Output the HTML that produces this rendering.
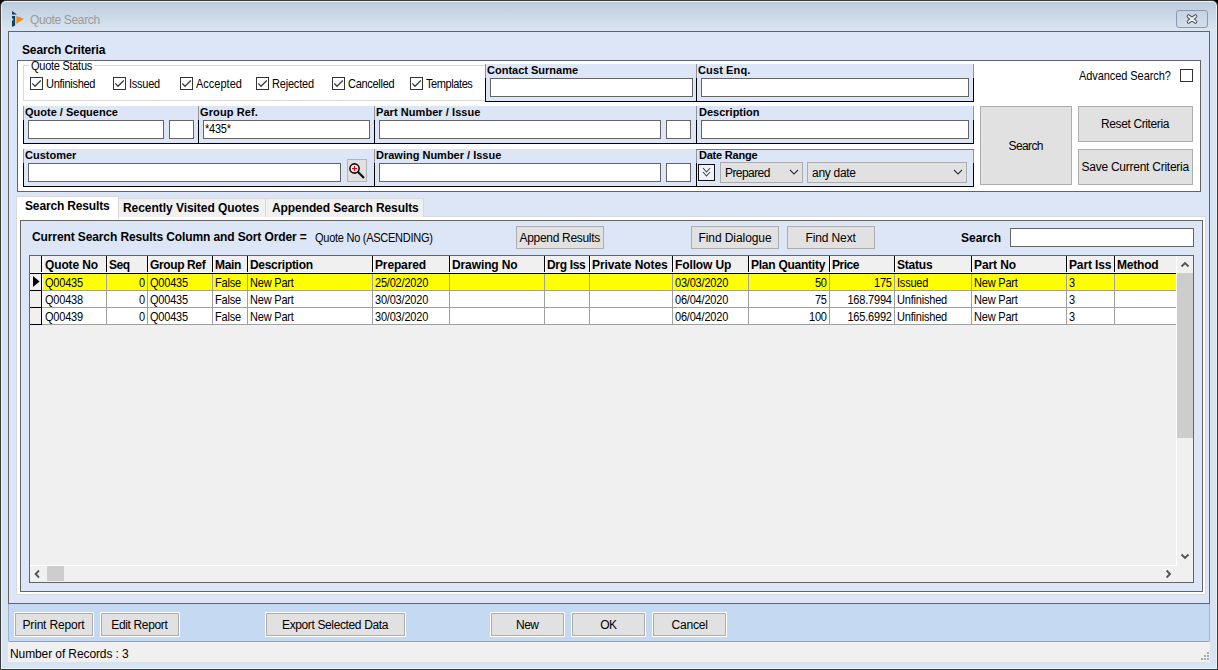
<!DOCTYPE html><html><head><meta charset="utf-8"><style>
html,body{margin:0;padding:0;background:#000;width:1218px;height:670px;overflow:hidden}
body>div{position:absolute}
div{box-sizing:border-box}
.t{position:absolute;white-space:pre;font-family:"Liberation Sans",sans-serif;color:#000}
.cb{position:absolute;width:13px;height:13px;border:1px solid #333;background:#fff;box-sizing:border-box}
svg{position:absolute}
</style></head><body>
<div style="left:0;top:0;width:1218px;height:670px;background:#3c3c3c;border-radius:6px 6px 0 0"></div>
<div style="left:1px;top:1px;width:1216px;height:668px;background:#edf2f8;border-radius:5px 5px 0 0"></div>
<div style="left:2px;top:2px;width:1214px;height:666px;background:#d7e3f1;border-radius:4px 4px 0 0"></div>
<div style="left:2px;top:2px;width:1214px;height:29px;background:linear-gradient(#bccbdc,#dbe6f1);border-radius:4px 4px 0 0"></div>
<svg style="position:absolute;left:10px;top:9px" width="18" height="20" viewBox="0 0 18 20"><path d="M2 2 L7 5.6 L2 5.6 Z" fill="#123f66"/><path d="M2 7 L5.1 7 L5.1 16.5 L2 18 L2 11.5 L3.2 11.5 L3.2 9.6 L2 9.6 Z" fill="#123f66"/><path d="M6.4 6.9 L14 9.8 L6.4 14.8 Z" fill="#f08a1c"/></svg>
<div class="t" style="left:30px;top:14px;font-size:12px;line-height:12px;letter-spacing:-0.36px;color:#9a9a9a;">Quote Search</div>
<div style="left:1176px;top:10px;width:32px;height:18px;border:1px solid #8a99b2;border-radius:3px;background:linear-gradient(#c6d3e2,#d3deea);box-sizing:border-box"></div>
<svg style="position:absolute;left:1184px;top:12px" width="16" height="14" viewBox="0 0 16 14"><path d="M4.6 4.2 L11.4 9.8 M11.4 4.2 L4.6 9.8" stroke="#3f4450" stroke-width="3.8" stroke-linecap="round"/><path d="M4.6 4.2 L11.4 9.8 M11.4 4.2 L4.6 9.8" stroke="#f2f2f2" stroke-width="2" stroke-linecap="round"/></svg>
<div style="left:8px;top:31px;width:1202px;height:573px;background:#dce6f7;box-shadow:inset 0 0 0 1px #646464"></div>
<div class="t" style="left:22px;top:44px;font-size:12px;line-height:12px;font-weight:bold;letter-spacing:-0.14px;">Search Criteria</div>
<div style="left:17px;top:60px;width:1184px;height:132px;background:#fff;box-shadow:inset 0 0 0 1px #646464"></div>
<div style="left:23px;top:65px;width:462px;height:36px;border:1px solid #d9d9d9;border-right:none;box-sizing:border-box"></div>
<div style="left:29px;top:62px;width:65px;height:7px;background:#fff"></div>
<div class="t" style="left:31px;top:60px;font-size:11px;line-height:11px;letter-spacing:-0.27px;transform:scaleY(1.125);transform-origin:0 0;">Quote Status</div>
<div class="cb" style="left:30px;top:77px"></div>
<svg style="position:absolute;left:30px;top:77px" width="13" height="13" viewBox="0 0 13 13"><path d="M2.3 6.4 L5 9.3 L10.8 3.5" stroke="#3a3a3a" stroke-width="1.25" fill="none"/></svg>
<div class="t" style="left:46px;top:78px;font-size:11px;line-height:11px;letter-spacing:-0.28px;transform:scaleY(1.125);transform-origin:0 0;">Unfinished</div>
<div class="cb" style="left:113px;top:77px"></div>
<svg style="position:absolute;left:113px;top:77px" width="13" height="13" viewBox="0 0 13 13"><path d="M2.3 6.4 L5 9.3 L10.8 3.5" stroke="#3a3a3a" stroke-width="1.25" fill="none"/></svg>
<div class="t" style="left:129px;top:78px;font-size:11px;line-height:11px;letter-spacing:-0.26px;transform:scaleY(1.125);transform-origin:0 0;">Issued</div>
<div class="cb" style="left:180px;top:77px"></div>
<svg style="position:absolute;left:180px;top:77px" width="13" height="13" viewBox="0 0 13 13"><path d="M2.3 6.4 L5 9.3 L10.8 3.5" stroke="#3a3a3a" stroke-width="1.25" fill="none"/></svg>
<div class="t" style="left:196px;top:78px;font-size:11px;line-height:11px;transform:scaleY(1.125);transform-origin:0 0;">Accepted</div>
<div class="cb" style="left:256px;top:77px"></div>
<svg style="position:absolute;left:256px;top:77px" width="13" height="13" viewBox="0 0 13 13"><path d="M2.3 6.4 L5 9.3 L10.8 3.5" stroke="#3a3a3a" stroke-width="1.25" fill="none"/></svg>
<div class="t" style="left:272px;top:78px;font-size:11px;line-height:11px;letter-spacing:-0.19px;transform:scaleY(1.125);transform-origin:0 0;">Rejected</div>
<div class="cb" style="left:332px;top:77px"></div>
<svg style="position:absolute;left:332px;top:77px" width="13" height="13" viewBox="0 0 13 13"><path d="M2.3 6.4 L5 9.3 L10.8 3.5" stroke="#3a3a3a" stroke-width="1.25" fill="none"/></svg>
<div class="t" style="left:348px;top:78px;font-size:11px;line-height:11px;letter-spacing:-0.29px;transform:scaleY(1.125);transform-origin:0 0;">Cancelled</div>
<div class="cb" style="left:410px;top:77px"></div>
<svg style="position:absolute;left:410px;top:77px" width="13" height="13" viewBox="0 0 13 13"><path d="M2.3 6.4 L5 9.3 L10.8 3.5" stroke="#3a3a3a" stroke-width="1.25" fill="none"/></svg>
<div class="t" style="left:426px;top:78px;font-size:11px;line-height:11px;letter-spacing:-0.41px;transform:scaleY(1.125);transform-origin:0 0;">Templates</div>
<div style="left:485px;top:64px;width:211px;height:37px;background:#dce6f7"></div>
<div style="left:485px;top:64px;width:1px;height:14px;background:#8e96a4"></div>
<div style="left:485px;top:78px;width:1px;height:24px;background:#000"></div>
<div style="left:485px;top:101px;width:212px;height:1px;background:#000"></div>
<div style="left:696px;top:64px;width:277px;height:37px;background:#dce6f7"></div>
<div style="left:696px;top:64px;width:1px;height:14px;background:#8e96a4"></div>
<div style="left:696px;top:78px;width:1px;height:24px;background:#000"></div>
<div style="left:696px;top:101px;width:278px;height:1px;background:#000"></div>
<div style="left:973px;top:64px;width:1px;height:14px;background:#8e96a4"></div>
<div style="left:973px;top:78px;width:1px;height:24px;background:#000"></div>
<div class="t" style="left:487px;top:65px;font-size:11px;line-height:11px;font-weight:bold;">Contact Surname</div>
<div class="t" style="left:698px;top:65px;font-size:11px;line-height:11px;font-weight:bold;letter-spacing:0.12px;">Cust Enq.</div>
<div style="left:490px;top:78px;width:203px;height:19px;background:#fff;border:1px solid #646464;box-sizing:border-box"></div>
<div style="left:701px;top:78px;width:268px;height:19px;background:#fff;border:1px solid #646464;box-sizing:border-box"></div>
<div class="t" style="left:1079px;top:70px;font-size:11px;line-height:11px;letter-spacing:-0.07px;transform:scaleY(1.125);transform-origin:0 0;">Advanced Search?</div>
<div class="cb" style="left:1180px;top:69px"></div>
<div style="left:23px;top:106px;width:175px;height:37px;background:#dce6f7"></div>
<div style="left:23px;top:106px;width:1px;height:14px;background:#8e96a4"></div>
<div style="left:23px;top:120px;width:1px;height:24px;background:#000"></div>
<div style="left:23px;top:143px;width:176px;height:1px;background:#000"></div>
<div style="left:198px;top:106px;width:176px;height:37px;background:#dce6f7"></div>
<div style="left:198px;top:106px;width:1px;height:14px;background:#8e96a4"></div>
<div style="left:198px;top:120px;width:1px;height:24px;background:#000"></div>
<div style="left:198px;top:143px;width:177px;height:1px;background:#000"></div>
<div style="left:374px;top:106px;width:322px;height:37px;background:#dce6f7"></div>
<div style="left:374px;top:106px;width:1px;height:14px;background:#8e96a4"></div>
<div style="left:374px;top:120px;width:1px;height:24px;background:#000"></div>
<div style="left:374px;top:143px;width:323px;height:1px;background:#000"></div>
<div style="left:696px;top:106px;width:277px;height:37px;background:#dce6f7"></div>
<div style="left:696px;top:106px;width:1px;height:14px;background:#8e96a4"></div>
<div style="left:696px;top:120px;width:1px;height:24px;background:#000"></div>
<div style="left:696px;top:143px;width:278px;height:1px;background:#000"></div>
<div style="left:973px;top:106px;width:1px;height:14px;background:#8e96a4"></div>
<div style="left:973px;top:120px;width:1px;height:24px;background:#000"></div>
<div class="t" style="left:25px;top:107px;font-size:11px;line-height:11px;font-weight:bold;">Quote / Sequence</div>
<div class="t" style="left:200px;top:107px;font-size:11px;line-height:11px;font-weight:bold;letter-spacing:0.11px;">Group Ref.</div>
<div class="t" style="left:376px;top:107px;font-size:11px;line-height:11px;font-weight:bold;letter-spacing:0.06px;">Part Number / Issue</div>
<div class="t" style="left:699px;top:107px;font-size:11px;line-height:11px;font-weight:bold;">Description</div>
<div style="left:28px;top:120px;width:136px;height:19px;background:#fff;border:1px solid #646464;box-sizing:border-box"></div>
<div style="left:169px;top:120px;width:25px;height:19px;background:#fff;border:1px solid #646464;box-sizing:border-box"></div>
<div style="left:203px;top:120px;width:167px;height:19px;background:#fff;border:1px solid #646464;box-sizing:border-box"></div>
<div class="t" style="left:205px;top:123px;font-size:11px;line-height:11px;letter-spacing:-0.25px;transform:scaleY(1.125);transform-origin:0 0;">*435*</div>
<div style="left:379px;top:120px;width:282px;height:19px;background:#fff;border:1px solid #646464;box-sizing:border-box"></div>
<div style="left:666px;top:120px;width:25px;height:19px;background:#fff;border:1px solid #646464;box-sizing:border-box"></div>
<div style="left:701px;top:120px;width:268px;height:19px;background:#fff;border:1px solid #646464;box-sizing:border-box"></div>
<div style="left:23px;top:149px;width:351px;height:37px;background:#dce6f7"></div>
<div style="left:23px;top:149px;width:1px;height:14px;background:#8e96a4"></div>
<div style="left:23px;top:163px;width:1px;height:24px;background:#000"></div>
<div style="left:23px;top:186px;width:352px;height:1px;background:#000"></div>
<div style="left:374px;top:149px;width:322px;height:37px;background:#dce6f7"></div>
<div style="left:374px;top:149px;width:1px;height:14px;background:#8e96a4"></div>
<div style="left:374px;top:163px;width:1px;height:24px;background:#000"></div>
<div style="left:374px;top:186px;width:323px;height:1px;background:#000"></div>
<div style="left:696px;top:149px;width:277px;height:37px;background:#dce6f7"></div>
<div style="left:696px;top:149px;width:1px;height:14px;background:#8e96a4"></div>
<div style="left:696px;top:163px;width:1px;height:24px;background:#000"></div>
<div style="left:696px;top:186px;width:278px;height:1px;background:#000"></div>
<div style="left:973px;top:149px;width:1px;height:14px;background:#8e96a4"></div>
<div style="left:973px;top:163px;width:1px;height:24px;background:#000"></div>
<div style="left:696px;top:149px;width:278px;height:1px;background:#737884"></div>
<div class="t" style="left:25px;top:150px;font-size:11px;line-height:11px;font-weight:bold;">Customer</div>
<div class="t" style="left:376px;top:150px;font-size:11px;line-height:11px;font-weight:bold;">Drawing Number / Issue</div>
<div class="t" style="left:699px;top:150px;font-size:11px;line-height:11px;font-weight:bold;letter-spacing:-0.22px;">Date Range</div>
<div style="left:28px;top:163px;width:313px;height:19px;background:#fff;border:1px solid #646464;box-sizing:border-box"></div>
<div style="left:347px;top:159px;width:20px;height:23px;background:#e1e1e1;border:1px solid #b4b4b4;box-sizing:border-box"></div>
<svg style="position:absolute;left:347px;top:159px" width="20" height="23" viewBox="0 0 20 23"><circle cx="7.5" cy="9.5" r="4.6" fill="#eef4f6" stroke="#111" stroke-width="1.6"/><path d="M7.5 7 V12 M5 9.5 H10" stroke="#e00" stroke-width="1.2"/><path d="M10.8 12.8 L17 19" stroke="#111" stroke-width="2.2"/></svg>
<div style="left:379px;top:163px;width:282px;height:19px;background:#fff;border:1px solid #646464;box-sizing:border-box"></div>
<div style="left:666px;top:163px;width:25px;height:19px;background:#fff;border:1px solid #646464;box-sizing:border-box"></div>
<div style="left:698px;top:164px;width:17px;height:17px;background:#eef3fa;border:1.5px solid #111;box-sizing:border-box"></div>
<svg style="position:absolute;left:698px;top:164px" width="17" height="17" viewBox="0 0 17 17"><path d="M5 4 L8.5 8 L12 4 M5 8 L8.5 12 L12 8" stroke="#444" stroke-width="1.1" fill="none"/></svg>
<div style="left:720px;top:162px;width:83px;height:21px;background:#e1e1e1;border:1px solid #acacac;box-sizing:border-box"></div>
<div class="t" style="left:725px;top:167px;font-size:12px;line-height:12px;letter-spacing:-0.57px;">Prepared</div>
<svg style="position:absolute;left:789px;top:168px" width="10" height="8" viewBox="0 0 10 8"><path d="M1 2 L5 6 L9 2" stroke="#333" stroke-width="1.1" fill="none"/></svg>
<div style="left:807px;top:162px;width:160px;height:21px;background:#e1e1e1;border:1px solid #acacac;box-sizing:border-box"></div>
<div class="t" style="left:812px;top:167px;font-size:12px;line-height:12px;letter-spacing:-0.29px;">any date</div>
<svg style="position:absolute;left:953px;top:168px" width="10" height="8" viewBox="0 0 10 8"><path d="M1 2 L5 6 L9 2" stroke="#333" stroke-width="1.1" fill="none"/></svg>
<div style="left:980px;top:106px;width:92px;height:79px;background:#e1e1e1;border:1px solid #adadad;box-sizing:border-box"></div>
<div class="t" style="left:1008.5px;top:140px;font-size:12px;line-height:12px;letter-spacing:-0.60px;">Search</div>
<div style="left:1078px;top:106px;width:115px;height:36px;background:#e1e1e1;border:1px solid #adadad;box-sizing:border-box"></div>
<div class="t" style="left:1101.0px;top:118px;font-size:12px;line-height:12px;letter-spacing:-0.38px;">Reset Criteria</div>
<div style="left:1078px;top:149px;width:115px;height:36px;background:#e1e1e1;border:1px solid #adadad;box-sizing:border-box"></div>
<div class="t" style="left:1081.5px;top:161px;font-size:12px;line-height:12px;letter-spacing:-0.25px;">Save Current Criteria</div>
<div style="left:16px;top:216px;width:1190px;height:379px;background:#fff;border:1px solid #d9d9d9;box-sizing:border-box"></div>
<div style="left:16px;top:196px;width:103px;height:23px;background:#fff;border:1px solid #d9d9d9;border-bottom:none;box-sizing:border-box"></div>
<div style="left:118px;top:198px;width:148px;height:19px;background:#f0f0f0;border:1px solid #d9d9d9;border-bottom:none;box-sizing:border-box"></div>
<div style="left:265px;top:198px;width:159px;height:19px;background:#f0f0f0;border:1px solid #d9d9d9;border-bottom:none;box-sizing:border-box"></div>
<div class="t" style="left:25px;top:200px;font-size:12px;line-height:12px;font-weight:bold;letter-spacing:-0.15px;">Search Results</div>
<div class="t" style="left:123px;top:202px;font-size:12px;line-height:12px;font-weight:bold;letter-spacing:-0.05px;">Recently Visited Quotes</div>
<div class="t" style="left:272px;top:202px;font-size:12px;line-height:12px;font-weight:bold;letter-spacing:-0.09px;">Appended Search Results</div>
<div style="left:20px;top:220px;width:1183px;height:372px;background:#dce6f7;border:1px solid #646464;box-sizing:border-box"></div>
<div class="t" style="left:32px;top:231px;font-size:12px;line-height:12px;font-weight:bold;letter-spacing:-0.11px;">Current Search Results Column and Sort Order =</div>
<div class="t" style="left:315px;top:232px;font-size:11px;line-height:11px;letter-spacing:-0.26px;transform:scaleY(1.125);transform-origin:0 0;">Quote No (ASCENDING)</div>
<div style="left:516px;top:226px;width:88px;height:23px;background:#e1e1e1;border:1px solid #adadad;box-sizing:border-box"></div>
<div class="t" style="left:519.5px;top:232px;font-size:12px;line-height:12px;letter-spacing:-0.31px;">Append Results</div>
<div style="left:691px;top:226px;width:88px;height:23px;background:#e1e1e1;border:1px solid #adadad;box-sizing:border-box"></div>
<div class="t" style="left:698.5px;top:232px;font-size:12px;line-height:12px;letter-spacing:-0.08px;">Find Dialogue</div>
<div style="left:787px;top:226px;width:88px;height:23px;background:#e1e1e1;border:1px solid #adadad;box-sizing:border-box"></div>
<div class="t" style="left:805.5px;top:232px;font-size:12px;line-height:12px;letter-spacing:-0.12px;">Find Next</div>
<div class="t" style="left:961px;top:232px;font-size:12px;line-height:12px;font-weight:bold;">Search</div>
<div style="left:1010px;top:228px;width:184px;height:19px;background:#fff;border:1px solid #646464;box-sizing:border-box"></div>
<div style="left:29px;top:255px;width:1165px;height:328px;background:#f0f0f0;border:1px solid #646464;box-sizing:border-box"></div>
<div style="left:30px;top:256px;width:1146px;height:16px;background:#f0f0f0"></div>
<div style="left:30px;top:272px;width:1146px;height:1px;background:#fff"></div>
<div style="left:30px;top:273px;width:1146px;height:1px;background:#000"></div>
<div style="left:30px;top:256px;width:12px;height:16px;background:#f0f0f0"></div>
<div style="left:41px;top:256px;width:1px;height:16px;background:#000"></div>
<div style="left:106px;top:256px;width:1px;height:16px;background:#000"></div>
<div style="left:43px;top:256px;width:1px;height:16px;background:#fff"></div>
<div class="t" style="left:45px;top:259px;font-size:12px;line-height:12px;font-weight:bold;letter-spacing:-0.14px;">Quote No</div>
<div style="left:147px;top:256px;width:1px;height:16px;background:#000"></div>
<div style="left:107px;top:256px;width:1px;height:16px;background:#fff"></div>
<div class="t" style="left:109px;top:259px;font-size:12px;line-height:12px;font-weight:bold;letter-spacing:-0.50px;">Seq</div>
<div style="left:212px;top:256px;width:1px;height:16px;background:#000"></div>
<div style="left:148px;top:256px;width:1px;height:16px;background:#fff"></div>
<div class="t" style="left:150px;top:259px;font-size:12px;line-height:12px;font-weight:bold;letter-spacing:-0.38px;">Group Ref</div>
<div style="left:247px;top:256px;width:1px;height:16px;background:#000"></div>
<div style="left:213px;top:256px;width:1px;height:16px;background:#fff"></div>
<div class="t" style="left:215px;top:259px;font-size:12px;line-height:12px;font-weight:bold;letter-spacing:-0.33px;">Main</div>
<div style="left:372px;top:256px;width:1px;height:16px;background:#000"></div>
<div style="left:248px;top:256px;width:1px;height:16px;background:#fff"></div>
<div class="t" style="left:250px;top:259px;font-size:12px;line-height:12px;font-weight:bold;letter-spacing:-0.30px;">Description</div>
<div style="left:449px;top:256px;width:1px;height:16px;background:#000"></div>
<div style="left:373px;top:256px;width:1px;height:16px;background:#fff"></div>
<div class="t" style="left:375px;top:259px;font-size:12px;line-height:12px;font-weight:bold;letter-spacing:-0.14px;">Prepared</div>
<div style="left:544px;top:256px;width:1px;height:16px;background:#000"></div>
<div style="left:450px;top:256px;width:1px;height:16px;background:#fff"></div>
<div class="t" style="left:452px;top:259px;font-size:12px;line-height:12px;font-weight:bold;letter-spacing:-0.11px;">Drawing No</div>
<div style="left:589px;top:256px;width:1px;height:16px;background:#000"></div>
<div style="left:545px;top:256px;width:1px;height:16px;background:#fff"></div>
<div class="t" style="left:547px;top:259px;font-size:12px;line-height:12px;font-weight:bold;letter-spacing:-0.33px;">Drg Iss</div>
<div style="left:672px;top:256px;width:1px;height:16px;background:#000"></div>
<div style="left:590px;top:256px;width:1px;height:16px;background:#fff"></div>
<div class="t" style="left:592px;top:259px;font-size:12px;line-height:12px;font-weight:bold;letter-spacing:-0.08px;">Private Notes</div>
<div style="left:748px;top:256px;width:1px;height:16px;background:#000"></div>
<div style="left:673px;top:256px;width:1px;height:16px;background:#fff"></div>
<div class="t" style="left:675px;top:259px;font-size:12px;line-height:12px;font-weight:bold;letter-spacing:-0.12px;">Follow Up</div>
<div style="left:829px;top:256px;width:1px;height:16px;background:#000"></div>
<div style="left:749px;top:256px;width:1px;height:16px;background:#fff"></div>
<div class="t" style="left:751px;top:259px;font-size:12px;line-height:12px;font-weight:bold;letter-spacing:-0.25px;">Plan Quantity</div>
<div style="left:894px;top:256px;width:1px;height:16px;background:#000"></div>
<div style="left:830px;top:256px;width:1px;height:16px;background:#fff"></div>
<div class="t" style="left:832px;top:259px;font-size:12px;line-height:12px;font-weight:bold;letter-spacing:-0.50px;">Price</div>
<div style="left:971px;top:256px;width:1px;height:16px;background:#000"></div>
<div style="left:895px;top:256px;width:1px;height:16px;background:#fff"></div>
<div class="t" style="left:897px;top:259px;font-size:12px;line-height:12px;font-weight:bold;letter-spacing:-0.20px;">Status</div>
<div style="left:1066px;top:256px;width:1px;height:16px;background:#000"></div>
<div style="left:972px;top:256px;width:1px;height:16px;background:#fff"></div>
<div class="t" style="left:974px;top:259px;font-size:12px;line-height:12px;font-weight:bold;letter-spacing:-0.08px;">Part No</div>
<div style="left:1114px;top:256px;width:1px;height:16px;background:#000"></div>
<div style="left:1067px;top:256px;width:1px;height:16px;background:#fff"></div>
<div class="t" style="left:1069px;top:259px;font-size:12px;line-height:12px;font-weight:bold;letter-spacing:-0.14px;">Part Iss</div>
<div style="left:1176px;top:256px;width:1px;height:16px;background:#000"></div>
<div style="left:1115px;top:256px;width:1px;height:16px;background:#fff"></div>
<div class="t" style="left:1117px;top:259px;font-size:12px;line-height:12px;font-weight:bold;letter-spacing:-0.20px;">Method</div>
<div style="left:42px;top:274px;width:1134px;height:16px;background:#fff"></div>
<div style="left:43px;top:274px;width:1133px;height:16px;background:#ffff00"></div>
<div style="left:42px;top:290px;width:1134px;height:1px;background:#a0a0a0"></div>
<div style="left:30px;top:274px;width:12px;height:17px;background:#f0f0f0"></div>
<div style="left:41px;top:274px;width:1px;height:17px;background:#000"></div>
<div style="left:30px;top:290px;width:12px;height:1px;background:#000"></div>
<div class="t" style="left:45px;top:277px;font-size:11px;line-height:11px;letter-spacing:-0.20px;transform:scaleY(1.125);transform-origin:0 0;">Q00435</div>
<div style="left:106px;top:274px;width:1px;height:16px;background:#a0a0a0"></div>
<div class="t" style="left:138.88px;top:277px;font-size:11px;line-height:11px;letter-spacing:-0.20px;transform:scaleY(1.125);transform-origin:0 0;">0</div>
<div style="left:147px;top:274px;width:1px;height:16px;background:#a0a0a0"></div>
<div class="t" style="left:150px;top:277px;font-size:11px;line-height:11px;letter-spacing:-0.20px;transform:scaleY(1.125);transform-origin:0 0;">Q00435</div>
<div style="left:212px;top:274px;width:1px;height:16px;background:#a0a0a0"></div>
<div class="t" style="left:215px;top:277px;font-size:11px;line-height:11px;letter-spacing:-0.20px;transform:scaleY(1.125);transform-origin:0 0;">False</div>
<div style="left:247px;top:274px;width:1px;height:16px;background:#a0a0a0"></div>
<div class="t" style="left:250px;top:277px;font-size:11px;line-height:11px;letter-spacing:-0.20px;transform:scaleY(1.125);transform-origin:0 0;">New Part</div>
<div style="left:372px;top:274px;width:1px;height:16px;background:#a0a0a0"></div>
<div class="t" style="left:375px;top:277px;font-size:11px;line-height:11px;letter-spacing:-0.20px;transform:scaleY(1.125);transform-origin:0 0;">25/02/2020</div>
<div style="left:449px;top:274px;width:1px;height:16px;background:#a0a0a0"></div>
<div style="left:544px;top:274px;width:1px;height:16px;background:#a0a0a0"></div>
<div style="left:589px;top:274px;width:1px;height:16px;background:#a0a0a0"></div>
<div style="left:672px;top:274px;width:1px;height:16px;background:#a0a0a0"></div>
<div class="t" style="left:675px;top:277px;font-size:11px;line-height:11px;letter-spacing:-0.20px;transform:scaleY(1.125);transform-origin:0 0;">03/03/2020</div>
<div style="left:748px;top:274px;width:1px;height:16px;background:#a0a0a0"></div>
<div class="t" style="left:814.95px;top:277px;font-size:11px;line-height:11px;letter-spacing:-0.20px;transform:scaleY(1.125);transform-origin:0 0;">50</div>
<div style="left:829px;top:274px;width:1px;height:16px;background:#a0a0a0"></div>
<div class="t" style="left:874.02px;top:277px;font-size:11px;line-height:11px;letter-spacing:-0.20px;transform:scaleY(1.125);transform-origin:0 0;">175</div>
<div style="left:894px;top:274px;width:1px;height:16px;background:#a0a0a0"></div>
<div class="t" style="left:897px;top:277px;font-size:11px;line-height:11px;letter-spacing:-0.20px;transform:scaleY(1.125);transform-origin:0 0;">Issued</div>
<div style="left:971px;top:274px;width:1px;height:16px;background:#a0a0a0"></div>
<div class="t" style="left:974px;top:277px;font-size:11px;line-height:11px;letter-spacing:-0.20px;transform:scaleY(1.125);transform-origin:0 0;">New Part</div>
<div style="left:1066px;top:274px;width:1px;height:16px;background:#a0a0a0"></div>
<div class="t" style="left:1069px;top:277px;font-size:11px;line-height:11px;letter-spacing:-0.20px;transform:scaleY(1.125);transform-origin:0 0;">3</div>
<div style="left:1114px;top:274px;width:1px;height:16px;background:#a0a0a0"></div>
<div style="left:42px;top:291px;width:1134px;height:16px;background:#fff"></div>
<div style="left:43px;top:291px;width:1133px;height:16px;background:#fff"></div>
<div style="left:42px;top:307px;width:1134px;height:1px;background:#a0a0a0"></div>
<div style="left:30px;top:291px;width:12px;height:17px;background:#f0f0f0"></div>
<div style="left:41px;top:291px;width:1px;height:17px;background:#000"></div>
<div style="left:30px;top:307px;width:12px;height:1px;background:#000"></div>
<div class="t" style="left:45px;top:294px;font-size:11px;line-height:11px;letter-spacing:-0.20px;transform:scaleY(1.125);transform-origin:0 0;">Q00438</div>
<div style="left:106px;top:291px;width:1px;height:16px;background:#a0a0a0"></div>
<div class="t" style="left:138.88px;top:294px;font-size:11px;line-height:11px;letter-spacing:-0.20px;transform:scaleY(1.125);transform-origin:0 0;">0</div>
<div style="left:147px;top:291px;width:1px;height:16px;background:#a0a0a0"></div>
<div class="t" style="left:150px;top:294px;font-size:11px;line-height:11px;letter-spacing:-0.20px;transform:scaleY(1.125);transform-origin:0 0;">Q00435</div>
<div style="left:212px;top:291px;width:1px;height:16px;background:#a0a0a0"></div>
<div class="t" style="left:215px;top:294px;font-size:11px;line-height:11px;letter-spacing:-0.20px;transform:scaleY(1.125);transform-origin:0 0;">False</div>
<div style="left:247px;top:291px;width:1px;height:16px;background:#a0a0a0"></div>
<div class="t" style="left:250px;top:294px;font-size:11px;line-height:11px;letter-spacing:-0.20px;transform:scaleY(1.125);transform-origin:0 0;">New Part</div>
<div style="left:372px;top:291px;width:1px;height:16px;background:#a0a0a0"></div>
<div class="t" style="left:375px;top:294px;font-size:11px;line-height:11px;letter-spacing:-0.20px;transform:scaleY(1.125);transform-origin:0 0;">30/03/2020</div>
<div style="left:449px;top:291px;width:1px;height:16px;background:#a0a0a0"></div>
<div style="left:544px;top:291px;width:1px;height:16px;background:#a0a0a0"></div>
<div style="left:589px;top:291px;width:1px;height:16px;background:#a0a0a0"></div>
<div style="left:672px;top:291px;width:1px;height:16px;background:#a0a0a0"></div>
<div class="t" style="left:675px;top:294px;font-size:11px;line-height:11px;letter-spacing:-0.20px;transform:scaleY(1.125);transform-origin:0 0;">06/04/2020</div>
<div style="left:748px;top:291px;width:1px;height:16px;background:#a0a0a0"></div>
<div class="t" style="left:814.95px;top:294px;font-size:11px;line-height:11px;letter-spacing:-0.20px;transform:scaleY(1.125);transform-origin:0 0;">75</div>
<div style="left:829px;top:291px;width:1px;height:16px;background:#a0a0a0"></div>
<div class="t" style="left:847.46px;top:294px;font-size:11px;line-height:11px;letter-spacing:-0.20px;transform:scaleY(1.125);transform-origin:0 0;">168.7994</div>
<div style="left:894px;top:291px;width:1px;height:16px;background:#a0a0a0"></div>
<div class="t" style="left:897px;top:294px;font-size:11px;line-height:11px;letter-spacing:-0.20px;transform:scaleY(1.125);transform-origin:0 0;">Unfinished</div>
<div style="left:971px;top:291px;width:1px;height:16px;background:#a0a0a0"></div>
<div class="t" style="left:974px;top:294px;font-size:11px;line-height:11px;letter-spacing:-0.20px;transform:scaleY(1.125);transform-origin:0 0;">New Part</div>
<div style="left:1066px;top:291px;width:1px;height:16px;background:#a0a0a0"></div>
<div class="t" style="left:1069px;top:294px;font-size:11px;line-height:11px;letter-spacing:-0.20px;transform:scaleY(1.125);transform-origin:0 0;">3</div>
<div style="left:1114px;top:291px;width:1px;height:16px;background:#a0a0a0"></div>
<div style="left:42px;top:308px;width:1134px;height:16px;background:#fff"></div>
<div style="left:43px;top:308px;width:1133px;height:16px;background:#fff"></div>
<div style="left:42px;top:324px;width:1134px;height:1px;background:#a0a0a0"></div>
<div style="left:30px;top:308px;width:12px;height:17px;background:#f0f0f0"></div>
<div style="left:41px;top:308px;width:1px;height:17px;background:#000"></div>
<div style="left:30px;top:324px;width:12px;height:1px;background:#000"></div>
<div class="t" style="left:45px;top:311px;font-size:11px;line-height:11px;letter-spacing:-0.20px;transform:scaleY(1.125);transform-origin:0 0;">Q00439</div>
<div style="left:106px;top:308px;width:1px;height:16px;background:#a0a0a0"></div>
<div class="t" style="left:138.88px;top:311px;font-size:11px;line-height:11px;letter-spacing:-0.20px;transform:scaleY(1.125);transform-origin:0 0;">0</div>
<div style="left:147px;top:308px;width:1px;height:16px;background:#a0a0a0"></div>
<div class="t" style="left:150px;top:311px;font-size:11px;line-height:11px;letter-spacing:-0.20px;transform:scaleY(1.125);transform-origin:0 0;">Q00435</div>
<div style="left:212px;top:308px;width:1px;height:16px;background:#a0a0a0"></div>
<div class="t" style="left:215px;top:311px;font-size:11px;line-height:11px;letter-spacing:-0.20px;transform:scaleY(1.125);transform-origin:0 0;">False</div>
<div style="left:247px;top:308px;width:1px;height:16px;background:#a0a0a0"></div>
<div class="t" style="left:250px;top:311px;font-size:11px;line-height:11px;letter-spacing:-0.20px;transform:scaleY(1.125);transform-origin:0 0;">New Part</div>
<div style="left:372px;top:308px;width:1px;height:16px;background:#a0a0a0"></div>
<div class="t" style="left:375px;top:311px;font-size:11px;line-height:11px;letter-spacing:-0.20px;transform:scaleY(1.125);transform-origin:0 0;">30/03/2020</div>
<div style="left:449px;top:308px;width:1px;height:16px;background:#a0a0a0"></div>
<div style="left:544px;top:308px;width:1px;height:16px;background:#a0a0a0"></div>
<div style="left:589px;top:308px;width:1px;height:16px;background:#a0a0a0"></div>
<div style="left:672px;top:308px;width:1px;height:16px;background:#a0a0a0"></div>
<div class="t" style="left:675px;top:311px;font-size:11px;line-height:11px;letter-spacing:-0.20px;transform:scaleY(1.125);transform-origin:0 0;">06/04/2020</div>
<div style="left:748px;top:308px;width:1px;height:16px;background:#a0a0a0"></div>
<div class="t" style="left:809.02px;top:311px;font-size:11px;line-height:11px;letter-spacing:-0.20px;transform:scaleY(1.125);transform-origin:0 0;">100</div>
<div style="left:829px;top:308px;width:1px;height:16px;background:#a0a0a0"></div>
<div class="t" style="left:847.46px;top:311px;font-size:11px;line-height:11px;letter-spacing:-0.20px;transform:scaleY(1.125);transform-origin:0 0;">165.6992</div>
<div style="left:894px;top:308px;width:1px;height:16px;background:#a0a0a0"></div>
<div class="t" style="left:897px;top:311px;font-size:11px;line-height:11px;letter-spacing:-0.20px;transform:scaleY(1.125);transform-origin:0 0;">Unfinished</div>
<div style="left:971px;top:308px;width:1px;height:16px;background:#a0a0a0"></div>
<div class="t" style="left:974px;top:311px;font-size:11px;line-height:11px;letter-spacing:-0.20px;transform:scaleY(1.125);transform-origin:0 0;">New Part</div>
<div style="left:1066px;top:308px;width:1px;height:16px;background:#a0a0a0"></div>
<div class="t" style="left:1069px;top:311px;font-size:11px;line-height:11px;letter-spacing:-0.20px;transform:scaleY(1.125);transform-origin:0 0;">3</div>
<div style="left:1114px;top:308px;width:1px;height:16px;background:#a0a0a0"></div>
<div style="left:1114px;top:274px;width:1px;height:51px;background:#a0a0a0"></div>
<svg style="position:absolute;left:32.5px;top:276px" width="8" height="11" viewBox="0 0 8 11"><path d="M0 0 L6.5 5.5 L0 11 Z" fill="#000"/></svg>
<div style="left:30px;top:565px;width:1146px;height:1px;background:#fff"></div>
<div style="left:1176px;top:256px;width:1px;height:310px;background:#fff"></div>
<div style="left:1177px;top:256px;width:16px;height:326px;background:#f0f0f0"></div>
<div style="left:1177px;top:273px;width:16px;height:165px;background:#cdcdcd"></div>
<svg style="position:absolute;left:1180px;top:261px" width="10" height="7" viewBox="0 0 10 7"><path d="M1.5 5.5 L5 2 L8.5 5.5" stroke="#555" stroke-width="1.9" fill="none"/></svg>
<svg style="position:absolute;left:1180px;top:553px" width="10" height="7" viewBox="0 0 10 7"><path d="M1.5 1.5 L5 5 L8.5 1.5" stroke="#555" stroke-width="1.9" fill="none"/></svg>
<div style="left:30px;top:566px;width:1146px;height:16px;background:#f0f0f0"></div>
<div style="left:47px;top:566px;width:17px;height:15px;background:#cdcdcd"></div>
<svg style="position:absolute;left:34px;top:569px" width="7" height="10" viewBox="0 0 7 10"><path d="M5 1.5 L1.6 5 L5 8.5" stroke="#555" stroke-width="1.9" fill="none"/></svg>
<svg style="position:absolute;left:1165px;top:569px" width="7" height="10" viewBox="0 0 7 10"><path d="M1.6 1.5 L5 5 L1.6 8.5" stroke="#555" stroke-width="1.9" fill="none"/></svg>
<div style="left:8px;top:604px;width:1202px;height:38px;background:#c5d9f3;border-left:1px solid #9fb3cc;border-bottom:1px solid #8fa2bb;border-right:1px solid #9fb3cc;box-sizing:border-box;border-radius:0 0 2px 2px"></div>
<div style="left:14px;top:612px;width:80px;height:25px;background:#fff"></div>
<div style="left:15px;top:613px;width:78px;height:23px;background:#e1e1e1;border:1px solid #adadad;box-sizing:border-box"></div>
<div class="t" style="left:22.5px;top:619px;font-size:12px;line-height:12px;letter-spacing:-0.18px;">Print Report</div>
<div style="left:100px;top:612px;width:80px;height:25px;background:#fff"></div>
<div style="left:101px;top:613px;width:78px;height:23px;background:#e1e1e1;border:1px solid #adadad;box-sizing:border-box"></div>
<div class="t" style="left:111.25px;top:619px;font-size:12px;line-height:12px;letter-spacing:-0.35px;">Edit Report</div>
<div style="left:265px;top:612px;width:141px;height:25px;background:#fff"></div>
<div style="left:266px;top:613px;width:139px;height:23px;background:#e1e1e1;border:1px solid #adadad;box-sizing:border-box"></div>
<div class="t" style="left:282.0px;top:619px;font-size:12px;line-height:12px;letter-spacing:-0.37px;">Export Selected Data</div>
<div style="left:490px;top:612px;width:75px;height:25px;background:#fff"></div>
<div style="left:491px;top:613px;width:73px;height:23px;background:#e1e1e1;border:1px solid #adadad;box-sizing:border-box"></div>
<div class="t" style="left:516.0px;top:619px;font-size:12px;line-height:12px;letter-spacing:-0.50px;">New</div>
<div style="left:571px;top:612px;width:75px;height:25px;background:#fff"></div>
<div style="left:572px;top:613px;width:73px;height:23px;background:#e1e1e1;border:1px solid #adadad;box-sizing:border-box"></div>
<div class="t" style="left:600.25px;top:619px;font-size:12px;line-height:12px;letter-spacing:-0.50px;">OK</div>
<div style="left:652px;top:612px;width:75px;height:25px;background:#fff"></div>
<div style="left:653px;top:613px;width:73px;height:23px;background:#e1e1e1;border:1px solid #adadad;box-sizing:border-box"></div>
<div class="t" style="left:671.5px;top:619px;font-size:12px;line-height:12px;letter-spacing:-0.20px;">Cancel</div>
<div style="left:8px;top:642px;width:1202px;height:20px;background:#f0f0f0"></div>
<div class="t" style="left:10px;top:648px;font-size:12px;line-height:12px;letter-spacing:-0.10px;">Number of Records : 3</div>
<div style="left:1207px;top:652px;width:2px;height:2px;background:#a8a8a8"></div>
<div style="left:1204px;top:655px;width:2px;height:2px;background:#a8a8a8"></div>
<div style="left:1207px;top:655px;width:2px;height:2px;background:#a8a8a8"></div>
<div style="left:1201px;top:658px;width:2px;height:2px;background:#a8a8a8"></div>
<div style="left:1204px;top:658px;width:2px;height:2px;background:#a8a8a8"></div>
<div style="left:1207px;top:658px;width:2px;height:2px;background:#a8a8a8"></div>
</body></html>
